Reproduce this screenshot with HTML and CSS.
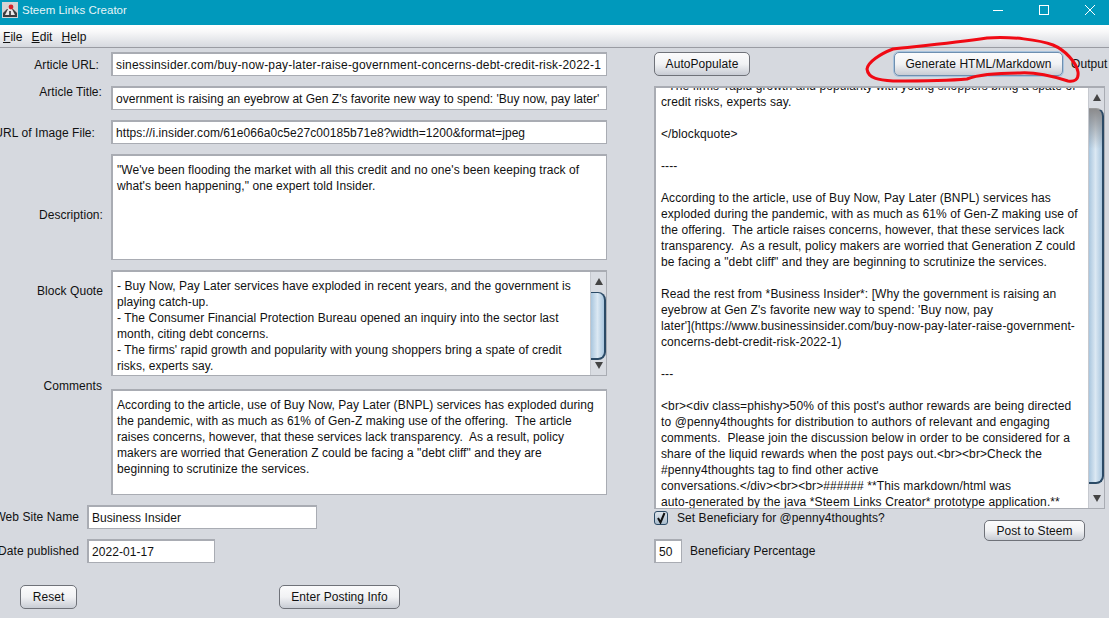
FILE: index.html
```html
<!DOCTYPE html>
<html lang="en">
<head>
  <meta charset="UTF-8">
  <meta name="viewport" content="width=device-width, initial-scale=1.0">
  <title>Steem Links Creator</title>
  <link rel="stylesheet" href="styles.css">
</head>
<body>

<div class="title-bar">
  <svg class="app-icon" width="16" height="16" viewBox="0 0 16 16">
    <rect x="0" y="0" width="16" height="16" fill="#d4d4d4"/>
    <path d="M1 15 L1 11 L5 7 L11 7 L15 11 L15 15 Z" fill="#3d3d3d"/>
    <path d="M8 3 L3 13 L13 13 Z" fill="#e8e8e8"/>
    <path d="M7 9 L9 9 L9 13 L7 13 Z" fill="#555"/>
    <circle cx="9" cy="5" r="2.4" fill="#d2232a"/>
  </svg>
  <span class="app-name">Steem Links Creator</span>
  <div class="window-btns">
    <svg width="12" height="12" viewBox="0 0 12 12"><path d="M1 6.5 H11" stroke="#fff"/></svg>
    <svg width="12" height="12" viewBox="0 0 12 12"><rect x="1.5" y="1.5" width="9" height="9" fill="none" stroke="#fff"/></svg>
    <svg width="12" height="12" viewBox="0 0 12 12"><path d="M1 1 L11 11 M11 1 L1 11" stroke="#fff"/></svg>
  </div>
</div>

<div class="menu-bar">
  <span><u>F</u>ile</span>
  <span><u>E</u>dit</span>
  <span><u>H</u>elp</span>
</div>

<div class="main">

  <!-- Left side: article form -->
  <div class="left-col">
    <div class="form-row row-url">
      <label class="field-label label-url">Article URL:</label>
      <div class="field line-field url-field">sinessinsider.com/buy-now-pay-later-raise-government-concerns-debt-credit-risk-2022-1</div>
    </div>
    <div class="form-row row-title">
      <label class="field-label label-title">Article Title:</label>
      <div class="field line-field title-field">overnment is raising an eyebrow at Gen Z's favorite new way to spend: 'Buy now, pay later'</div>
    </div>
    <div class="form-row row-image">
      <label class="field-label label-image">URL of Image File:</label>
      <div class="field line-field">https://i.insider.com/61e066a0c5e27c00185b71e8?width=1200&amp;format=jpeg</div>
    </div>
    <div class="form-row row-desc">
      <label class="field-label label-desc">Description:</label>
      <div class="field text-field">"We've been flooding the market with all this credit and no one's been keeping track of
what's been happening," one expert told Insider.</div>
    </div>
    <div class="form-row row-quote">
      <label class="field-label label-top">Block Quote</label>
      <div class="field text-field with-scroll">
        <div class="text-body">- Buy Now, Pay Later services have exploded in recent years, and the government is
playing catch-up.
- The Consumer Financial Protection Bureau opened an inquiry into the sector last
month, citing debt concerns.
- The firms' rapid growth and popularity with young shoppers bring a spate of credit
risks, experts say.</div>
        <div class="scrollbar">
          <div class="arrow arrow-up"></div>
          <div class="thumb thumb-quote"></div>
          <div class="arrow arrow-down"></div>
        </div>
      </div>
    </div>
    <div class="form-row row-comments">
      <label class="field-label label-comments">Comments</label>
      <div class="field text-field">According to the article, use of Buy Now, Pay Later (BNPL) services has exploded during
the pandemic, with as much as 61% of Gen-Z making use of the offering.  The article
raises concerns, however, that these services lack transparency.  As a result, policy
makers are worried that Generation Z could be facing a "debt cliff" and they are
beginning to scrutinize the services.</div>
    </div>
    <div class="form-row row-site">
      <label class="field-label short-label">Web Site Name</label>
      <div class="field line-field site-field">Business Insider</div>
    </div>
    <div class="form-row row-date">
      <label class="field-label short-label">Date published</label>
      <div class="field line-field date-field">2022-01-17</div>
    </div>
    <div class="bottom-btns">
      <button class="button reset-btn">Reset</button>
      <button class="button enter-btn">Enter Posting Info</button>
    </div>
  </div>

  <!-- Right side: generated output -->
  <div class="right-col">
    <div class="top-btns">
      <button class="button auto-btn">AutoPopulate</button>
      <button class="button generate-btn">Generate HTML/Markdown</button>
      <span class="output-label">Output</span>
      <svg class="red-circle" width="230" height="56" viewBox="0 0 230 56">
        <path d="M33 17 C60 14 93 11 127 6 C150 4 180 8 193 13 C205 18 216 30 218 40 C219 48 214 50 208 49 C195 45 175 40 160 41 C140 41 120 42 107 47 C85 49 55 49 33 49 C20 48 8 47 7 37 C8 30 20 22 33 17 Z" fill="none" stroke="#f00a14" stroke-width="3"/>
      </svg>
    </div>
    <div class="field output-field with-scroll">
      <div class="text-body output-text">- The firms' rapid growth and popularity with young shoppers bring a spate of
credit risks, experts say.

&lt;/blockquote&gt;

----

According to the article, use of Buy Now, Pay Later (BNPL) services has
exploded during the pandemic, with as much as 61% of Gen-Z making use of
the offering.  The article raises concerns, however, that these services lack
transparency.  As a result, policy makers are worried that Generation Z could
be facing a "debt cliff" and they are beginning to scrutinize the services.

Read the rest from *Business Insider*: [Why the government is raising an
eyebrow at Gen Z's favorite new way to spend: 'Buy now, pay
later'](https://www.businessinsider.com/buy-now-pay-later-raise-government-
concerns-debt-credit-risk-2022-1)

---

&lt;br&gt;&lt;div class=phishy&gt;50% of this post's author rewards are being directed
to @penny4thoughts for distribution to authors of relevant and engaging
comments.  Please join the discussion below in order to be considered for a
share of the liquid rewards when the post pays out.&lt;br&gt;&lt;br&gt;Check the
#penny4thoughts tag to find other active
conversations.&lt;/div&gt;&lt;br&gt;&lt;br&gt;###### **This markdown/html was
auto-generated by the java *Steem Links Creator* prototype application.**</div>
      <div class="scrollbar">
        <div class="arrow arrow-up"></div>
        <div class="thumb thumb-output"></div>
        <div class="arrow arrow-down"></div>
      </div>
    </div>
    <div class="post-area">
      <div class="post-left">
        <div class="check-row">
          <span class="checkbox">
            <svg width="12" height="12" viewBox="0 0 12 12"><path d="M3 6 L5.5 10.5 L9.5 1" fill="none" stroke="#111" stroke-width="2"/></svg>
          </span>
          <span>Set Beneficiary for @penny4thoughts?</span>
        </div>
        <div class="percent-row">
          <div class="field line-field percent-field">50</div>
          <span>Beneficiary Percentage</span>
        </div>
      </div>
      <button class="button post-btn">Post to Steem</button>
    </div>
  </div>

</div>

</body>
</html>
```

FILE: styles.css
```css
* {
  box-sizing: border-box;
}

html, body {
  margin: 0;
  height: 618px;
  overflow: hidden;
}

body {
  font-family: "Liberation Sans", Arial, sans-serif;
  font-size: 12px;
  letter-spacing: 0.06px;
  color: #111;
  background-color: #d6d9df;
}

.title-bar {
  height: 25px;
  display: flex;
  align-items: center;
  padding: 0 0 5px 2px;
  background-color: #0099bc;
  color: white;
}

.app-icon {
  margin-right: 4px;
}

.app-name {
  font-size: 11.5px;
  letter-spacing: 0;
  opacity: 0.9;
}

.window-btns {
  margin-left: auto;
  display: flex;
  gap: 34px;
  padding-right: 13px;
}

.menu-bar {
  height: 23px;
  display: flex;
  gap: 9px;
  align-items: center;
  padding: 2px 0 0 3px;
  background: linear-gradient(#ffffff 0%, #f8f8f9 30%, #d6d9df 100%);
  border-bottom: 1px solid #9a9ca3;
}

.main {
  display: flex;
}

.left-col {
  width: 654px;
  flex: none;
  padding-top: 4px;
}

.right-col {
  flex: 1;
  padding-top: 4px;
}

.form-row {
  display: flex;
  align-items: center;
  white-space: nowrap;
}

.field-label {
  width: 103px;
  flex: none;
  margin-right: 8px;
  display: flex;
  justify-content: flex-end;
}

.field {
  background-color: white;
  border: 2px solid #a9acb3;
  border-right-width: 1px;
  border-bottom-width: 1px;
  overflow: hidden;
}

.line-field {
  height: 24px;
  line-height: 22px;
  padding: 0 3px;
  white-space: nowrap;
}

.url-field { letter-spacing: 0.19px; }
.title-field { letter-spacing: 0.01px; }

.form-row .line-field,
.form-row .text-field {
  width: 496px;
}

.text-field {
  height: 106px;
  padding: 6px 4px 0;
  line-height: 16px;
  white-space: pre;
}

.row-url { margin-top: 0; }
.row-title { margin-top: 10px; }
.row-image { margin-top: 10px; }
.row-desc { margin-top: 10px; }
.row-quote { margin-top: 10px; }
.row-comments { margin-top: 13px; }
.row-site { margin-top: 10px; }
.row-date { margin-top: 10px; }

.label-url { width: 99px; margin-right: 12px; margin-top: 2px; }
.label-title { width: 102px; margin-right: 9px; margin-top: -12px; }
.label-image { width: 95px; margin-right: 16px; margin-top: 2px; }
.label-desc { margin-top: 16px; }
.label-top { align-self: flex-start; margin-top: 14px; }
.label-comments { align-self: flex-start; margin-top: -10px; width: 102px; margin-right: 9px; }

.short-label {
  width: 79px;
}

.form-row .site-field { width: 230px; }
.form-row .date-field { width: 128px; }

.form-row .with-scroll,
.with-scroll {
  display: flex;
  padding: 0;
}

.text-body {
  flex: 1;
  padding: 6px 4px 0;
  line-height: 16px;
  white-space: pre;
  overflow: hidden;
}

.scrollbar {
  width: 16px;
  flex: none;
  display: flex;
  flex-direction: column;
  background-color: #d9dce2;
  border-left: 1px solid #c6c9cf;
}

.arrow {
  width: 0;
  height: 0;
  margin: 6px auto;
  border-left: 4px solid transparent;
  border-right: 4px solid transparent;
}

.arrow-up {
  border-bottom: 7px solid #444;
}

.arrow-down {
  margin-top: auto;
  border-top: 7px solid #444;
}

.thumb {
  border: 1px solid #2b4a66;
  border-right-width: 2px;
  border-bottom-width: 2px;
  border-left: none;
  border-radius: 0 8px 8px 0;
  background: linear-gradient(90deg, #a9c6de, #dbe8f3 50%, #a9c6de);
}

.thumb-quote {
  height: 68px;
  margin-top: 1px;
}

.thumb-output {
  height: 376px;
  margin-top: 1px;
  border-top-color: #999;
  background:
    linear-gradient(#8b8b8d, rgba(170, 170, 172, 0) 40px),
    linear-gradient(90deg, #a9c6de, #dbe8f3 50%, #a9c6de);
}

.button {
  height: 24px;
  padding: 0;
  font-family: inherit;
  font-size: 12px;
  letter-spacing: inherit;
  color: #111;
  border: 1px solid #6f7279;
  border-radius: 5px;
  background: linear-gradient(#fbfbfc, #f1f2f4 50%, #c8ccd4);
}

.bottom-btns {
  display: flex;
  margin-top: 22px;
  padding-left: 20px;
}

.reset-btn { width: 57px; }
.enter-btn { width: 121px; margin-left: 202px; }

.top-btns {
  position: relative;
  display: flex;
  align-items: center;
  white-space: nowrap;
}

.auto-btn { width: 96px; }

.generate-btn {
  width: 169px;
  margin-left: 144px;
  border-color: #6e8fb0;
  box-shadow: 0 0 0 1px #a9c4de;
}

.output-label {
  margin-left: 8px;
}

/* hand-drawn mark over the generate button */
.red-circle {
  position: absolute;
  left: 206px;
  top: -20px;
  pointer-events: none;
}

.output-field {
  width: 451px;
  height: 423px;
  margin-top: 10px;
}

.output-text {
  padding: 0 5px;
  margin-top: -10px;
  letter-spacing: 0.1px;
}

.post-area {
  display: flex;
  white-space: nowrap;
}

.post-left {
  flex: none;
  width: 330px;
}

.check-row {
  display: flex;
  align-items: center;
  height: 16px;
  gap: 9px;
  margin-top: 1px;
}

.checkbox {
  width: 14px;
  height: 14px;
  display: flex;
  align-items: center;
  justify-content: center;
  border: 1px solid #2b4a66;
  border-radius: 3px;
  background: linear-gradient(#dfe5ec, #a9bccd);
}

.percent-row {
  display: flex;
  align-items: center;
  gap: 8px;
  margin-top: 13px;
}

.percent-field {
  width: 28px;
}

.post-btn {
  width: 101px;
  height: 21px;
  margin-top: 11px;
}
```
